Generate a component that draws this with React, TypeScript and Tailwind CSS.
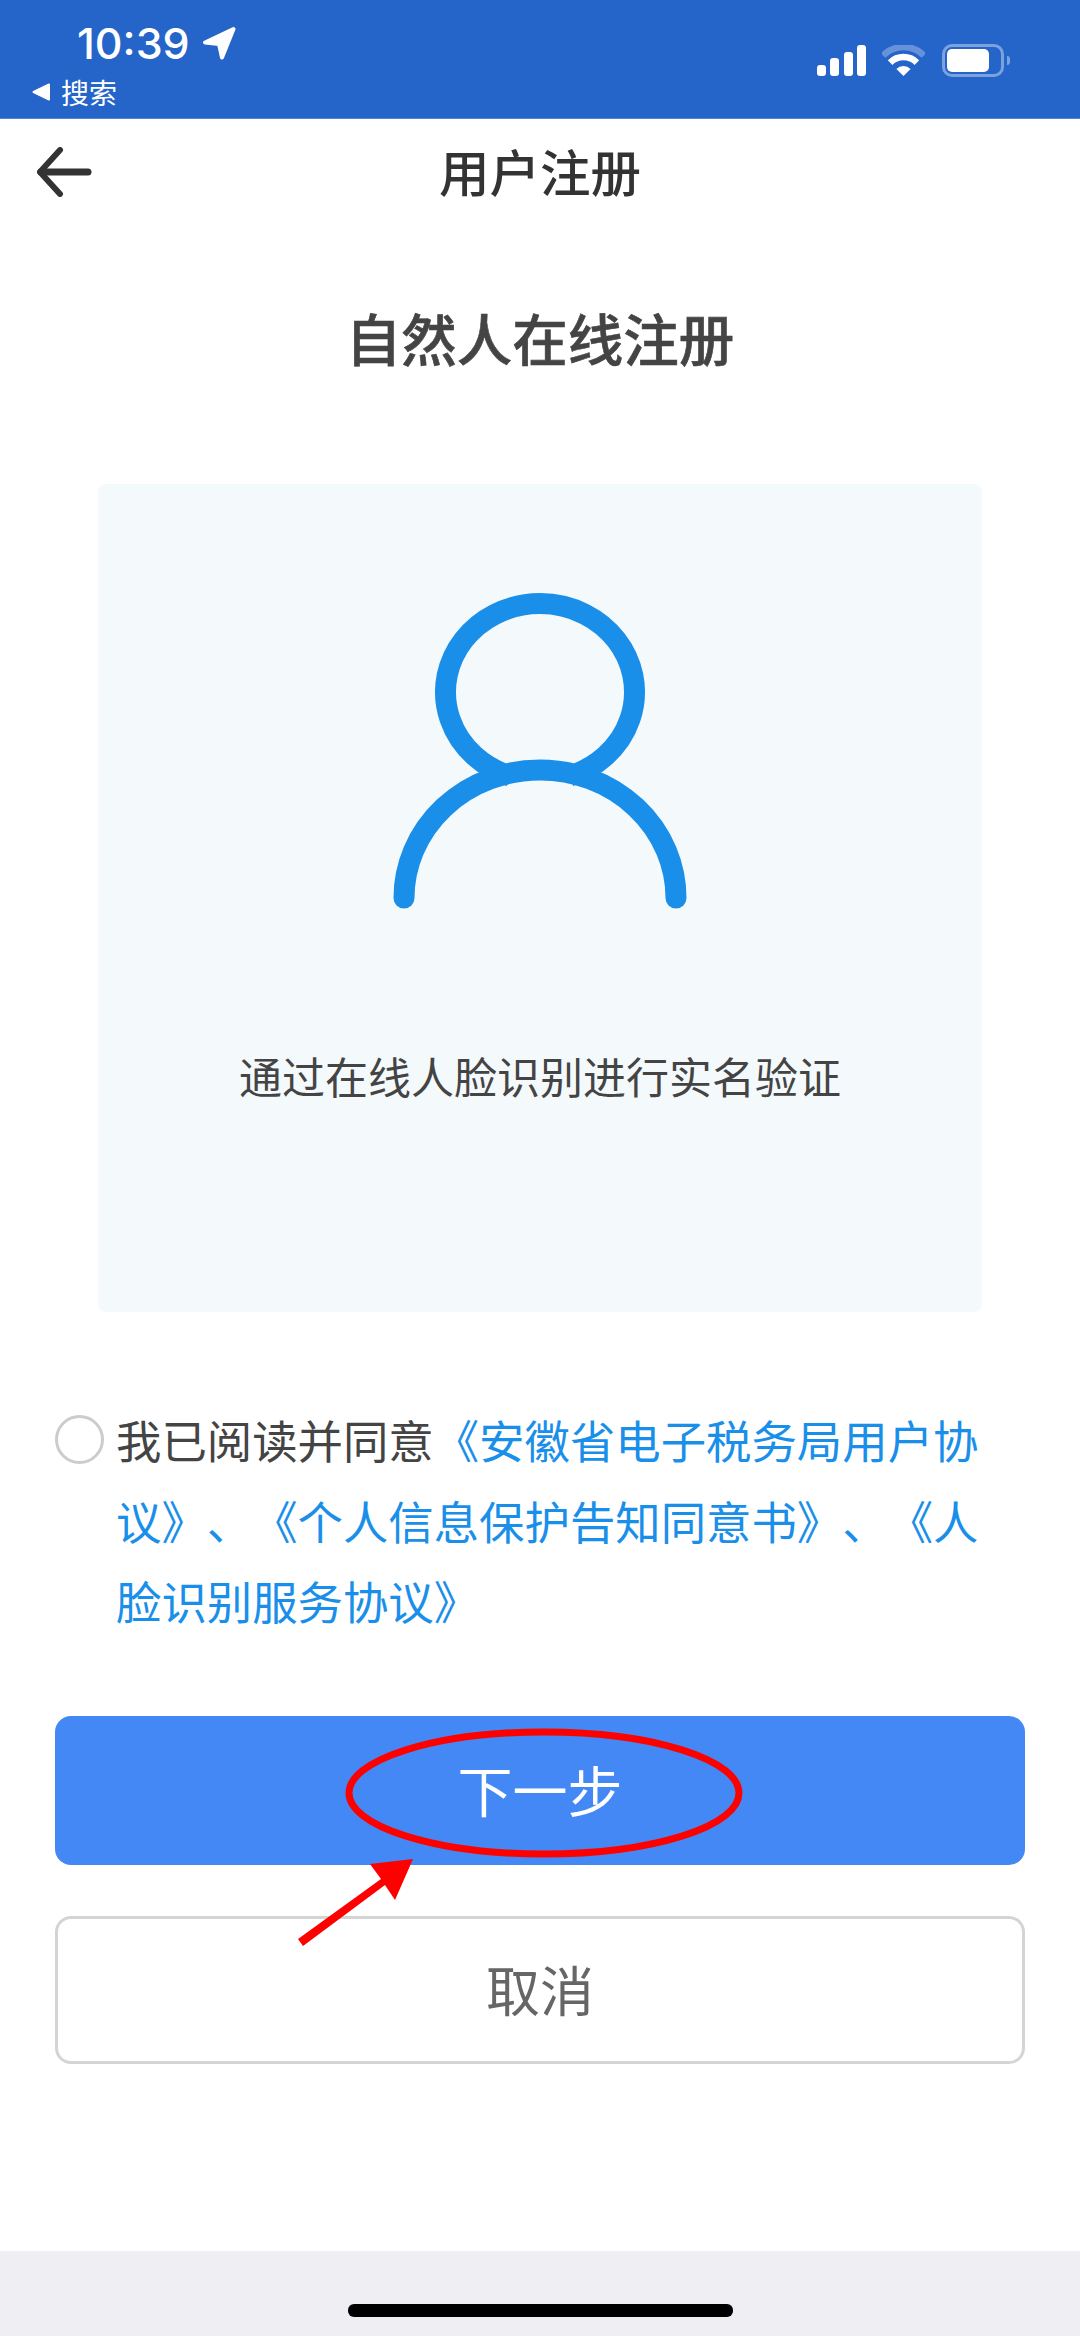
export default function App() {
  const cjk = '"Noto Sans CJK SC", "Noto Sans", sans-serif';
  return (
    <div className="relative flex h-[2336px] w-[1080px] flex-col overflow-hidden bg-white" style={{ fontFamily: cjk }}>
      {/* status bar */}
      <div className="box-border flex h-[119px] items-start justify-between border-b border-[#4f87de] bg-[#2564c9] text-white">
        <div className="flex flex-col pl-[32px]">
          <div className="flex items-center pl-[45px] pt-[20px]">
            <span className="text-[43px] leading-[46px] font-medium" style={{ fontFamily: 'Inter, sans-serif' }}>10:39</span>
            <svg className="ml-[12px]" width="34" height="34" viewBox="0 0 34 34">
              <path d="M31.5 3 L3 16.5 L17 18 L20 31.5 Z" fill="#fff" stroke="#fff" strokeWidth="4" strokeLinejoin="round" />
            </svg>
          </div>
          <div className="mt-[10px] flex items-center gap-[11px]">
            <svg width="18" height="18" viewBox="0 0 18 18"><path d="M17 1.5 L17 16.5 L1.5 9 Z" fill="#fff" stroke="#fff" strokeWidth="2" strokeLinejoin="round" /></svg>
            <span className="text-[28px] leading-[32px]">搜索</span>
          </div>
        </div>
        <div className="flex items-start pr-[70px] pt-[44px]">
          <svg className="mt-[1px]" width="50" height="32" viewBox="0 0 50 32" fill="#fff">
            <rect x="0" y="20" width="9" height="11" rx="3" />
            <rect x="13" y="13" width="9" height="18" rx="3" />
            <rect x="27" y="7" width="9" height="24" rx="3" />
            <rect x="40" y="0" width="9" height="31" rx="3" />
          </svg>
          <svg className="ml-[15px] mt-[1px]" width="43" height="32" viewBox="0 0 43 32" fill="none" stroke="#fff">
            <path d="M1 10.5 A29 29 0 0 1 42 10.5" strokeWidth="6.5" strokeOpacity="0.3" />
            <path d="M8.1 17.6 A19 19 0 0 1 34.9 17.6" strokeWidth="6.5" />
            <path d="M21.5 31 L14.4 23.9 A10 10 0 0 1 28.6 23.9 Z" fill="#fff" stroke="none" />
          </svg>
          <div className="ml-[17px] flex items-center">
            <div className="box-border flex h-[33px] w-[62px] items-center rounded-[10px] border-[3px] border-white/40 pl-[2px]">
              <div className="h-[23px] w-[42px] rounded-[5px] bg-white" />
            </div>
            <div className="ml-[3px] h-[9px] w-[3px] rounded-r-[3px] bg-white/40" />
          </div>
        </div>
      </div>

      {/* nav */}
      <div className="grid h-[110px] grid-cols-[1fr_auto_1fr] items-center">
        <svg className="ml-[36px] -mt-[4px]" width="58" height="50" viewBox="0 0 58 50" fill="none" stroke="#333" strokeLinecap="round" strokeLinejoin="round">
          <path d="M24 3 L4 25 L24 47" strokeWidth="6" />
          <path d="M5 25 H52" strokeWidth="7" />
        </svg>
        <span className="-mt-[8px] text-[50.5px] leading-[60px] font-medium text-[#333]">用户注册</span>
        <span />
      </div>

      <h1 className="mt-[76px] text-center text-[55.5px] leading-[64px] font-medium text-[#444] [-webkit-text-stroke:0.6px_#444]">自然人在线注册</h1>

      {/* card */}
      <div className="mx-[98px] mt-[115px] flex h-[828px] flex-col items-center rounded-[8px] bg-[#f4f9fc] pt-[100px]">
        <svg width="310" height="330" viewBox="385 584 310 330" fill="none" stroke="#1a8fea" strokeWidth="21">
          <path d="M510 776 A94.5 88.5 0 1 1 570 776" />
          <path d="M404 898 A136 128 0 0 1 676 898" strokeLinecap="round" />
        </svg>
        <p className="mt-[131px] text-[43px] leading-[60px] text-[#444]">通过在线人脸识别进行实名验证</p>
      </div>

      {/* agreement */}
      <div className="mt-[90px] flex px-[55px]">
        <div className="mt-[13px] box-border h-[49px] w-[49px] shrink-0 rounded-full border-[3px] border-[#ccc]" />
        <p className="-mt-[3px] ml-[12px] w-[869px] text-[45.4px] leading-[80.5px] text-[#444] [text-spacing-trim:space-all]">
          我已阅读并同意
          <span className="text-[#1a8fea]">《安徽省电子税务局用户协议》、《个人信息保护告知同意书》、《人脸识别服务协议》</span>
        </p>
      </div>

      {/* buttons */}
      <div className="mt-[75px] flex flex-col gap-[51px] px-[55px]">
        <button className="h-[149px] rounded-[16px] bg-[#4488f6] pb-[3px] text-[55px] text-white">下一步</button>
        <button className="box-border h-[148px] rounded-[16px] border-[3px] border-[#d4d4d4] bg-white pb-[3px] text-[54px] text-[#666]">取消</button>
      </div>

      <div className="flex-1" />
      <div className="flex h-[85px] justify-center bg-[#efeef3] pt-[53px]">
        <div className="h-[13px] w-[385px] rounded-[6px] bg-black" />
      </div>

      {/* red annotation */}
      <svg className="pointer-events-none absolute left-0 top-0" width="1080" height="2336" viewBox="0 0 1080 2336" fill="none">
        <ellipse cx="544" cy="1793" rx="195" ry="61" stroke="#f00" strokeWidth="7" />
        <path d="M298 1939 L381 1879 L370 1864 L413 1859 L395 1900 L385 1885 L303 1946 Z" fill="#f00" />
      </svg>
    </div>
  );
}
